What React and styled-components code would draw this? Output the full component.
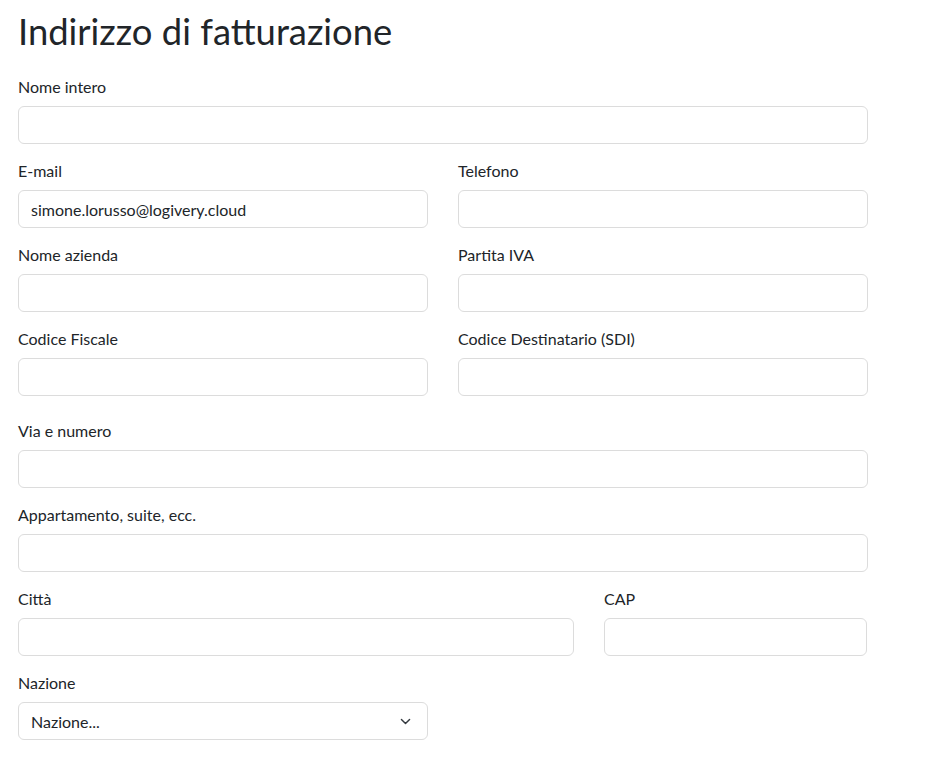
import styled, { createGlobalStyle } from "styled-components";

const GlobalStyle = createGlobalStyle`
  body {
    margin: 0;
    background: #fff;
    font-family: Lato, "Open Sans", sans-serif;
    color: #212529;
  }
`;

const Page = styled.div`
  padding: 7px 64px 24px 18px;
`;

const Title = styled.h1`
  font-size: 36.4px;
  font-weight: 400;
  line-height: 48px;
  margin: 0 0 21px 0;
`;

const Row = styled.div`
  display: grid;
  grid-template-columns: ${(p) => p.cols || "1fr"};
  column-gap: 30px;
  width: 850px;
  margin-bottom: ${(p) => (p.spaced ? "8px" : "0")};
`;

const Field = styled.div`
  display: flex;
  flex-direction: column;
  margin-bottom: 16px;
`;

const Label = styled.label`
  font-size: 16px;
  line-height: 22px;
  margin-bottom: 8px;
`;

const Input = styled.input`
  box-sizing: border-box;
  height: 38px;
  padding: 0 12px;
  border: 1px solid #dcdcdc;
  border-radius: 6px;
  font-family: inherit;
  font-size: 16px;
  color: #212529;
  background: #fff;
  outline: none;
`;

const SelectBox = styled.div`
  display: flex;
  align-items: center;
  justify-content: space-between;
  box-sizing: border-box;
  height: 38px;
  padding: 0 15px 0 12px;
  border: 1px solid #dcdcdc;
  border-radius: 6px;
  font-size: 16px;
  background: #fff;
`;

const Chevron = () => (
  <svg width="13" height="13" viewBox="0 0 16 16" fill="none">
    <path d="M3 5.5l5 5 5-5" stroke="#343a40" strokeWidth="1.8" strokeLinecap="round" strokeLinejoin="round" />
  </svg>
);

function TextField({ label, value }) {
  return (
    <Field>
      <Label>{label}</Label>
      <Input defaultValue={value} />
    </Field>
  );
}

export default function App() {
  return (
    <Page>
      <GlobalStyle />
      <Title>Indirizzo di fatturazione</Title>
      <Row>
        <TextField label="Nome intero" />
      </Row>
      <Row cols="1fr 1fr">
        <TextField label="E-mail" value="simone.lorusso@logivery.cloud" />
        <TextField label="Telefono" />
      </Row>
      <Row cols="1fr 1fr">
        <TextField label="Nome azienda" />
        <TextField label="Partita IVA" />
      </Row>
      <Row cols="1fr 1fr" spaced>
        <TextField label="Codice Fiscale" />
        <TextField label="Codice Destinatario (SDI)" />
      </Row>
      <Row>
        <TextField label="Via e numero" />
      </Row>
      <Row>
        <TextField label="Appartamento, suite, ecc." />
      </Row>
      <Row cols="556px 263px">
        <TextField label="Città" />
        <TextField label="CAP" />
      </Row>
      <Row cols="1fr 1fr">
        <Field>
          <Label>Nazione</Label>
          <SelectBox>
            <span>Nazione...</span>
            <Chevron />
          </SelectBox>
        </Field>
      </Row>
    </Page>
  );
}
